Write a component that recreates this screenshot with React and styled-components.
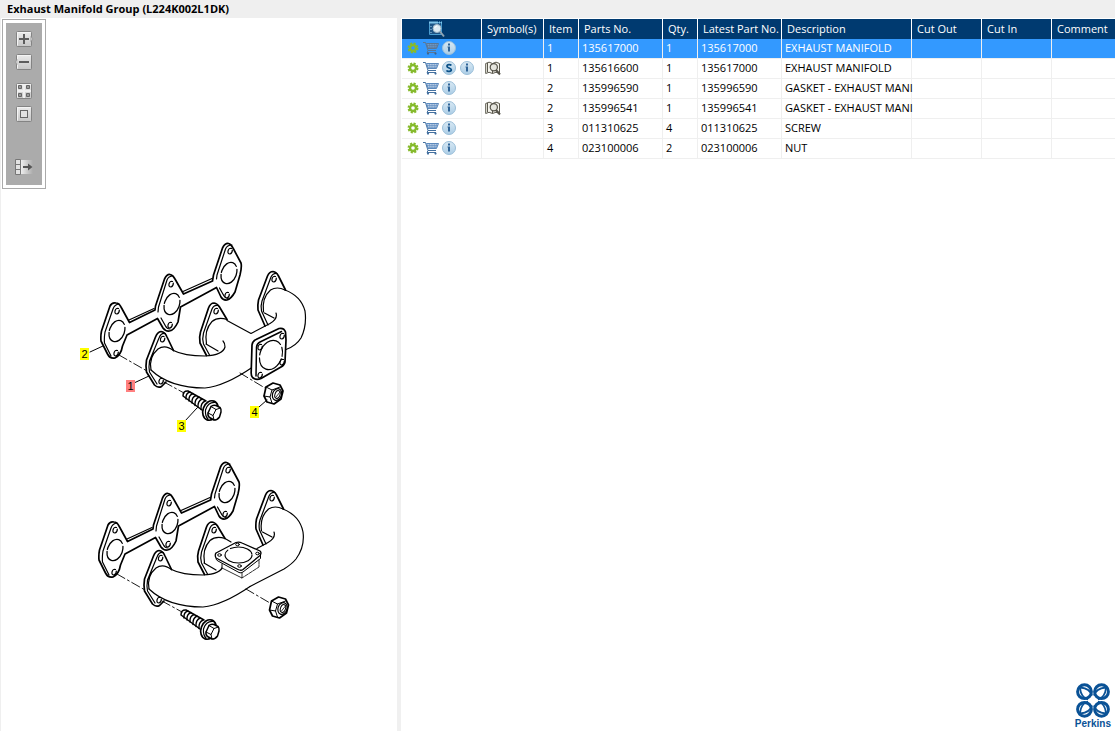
import React from 'react'
import styled, { createGlobalStyle } from 'styled-components'

const columns = [
  { title: 'Symbol(s)', width: 62 },
  { title: 'Item', width: 35 },
  { title: 'Parts No.', width: 84 },
  { title: 'Qty.', width: 35 },
  { title: 'Latest Part No.', width: 84 },
  { title: 'Description', width: 130 },
  { title: 'Cut Out', width: 70 },
  { title: 'Cut In', width: 70 },
  { title: 'Comment' },
]

const parts = [
  { item: '1', no: '135617000', qty: '1', latest: '135617000', description: 'EXHAUST MANIFOLD', selected: true },
  { item: '1', no: '135616600', qty: '1', latest: '135617000', description: 'EXHAUST MANIFOLD', service: true, book: true },
  { item: '2', no: '135996590', qty: '1', latest: '135996590', description: 'GASKET - EXHAUST MANI' },
  { item: '2', no: '135996541', qty: '1', latest: '135996541', description: 'GASKET - EXHAUST MANI', book: true },
  { item: '3', no: '011310625', qty: '4', latest: '011310625', description: 'SCREW' },
  { item: '4', no: '023100006', qty: '2', latest: '023100006', description: 'NUT' },
]

const callouts = [
  { label: '2', x: 79, y: 330 },
  { label: '1', x: 125, y: 362, active: true },
  { label: '3', x: 176, y: 402 },
  { label: '4', x: 249, y: 388 },
]

/* toolbar icons */

const Plate = () => (
  <>
    <rect x="2.5" y="0.5" width="15" height="15" rx="1" fill="url(#plate)" stroke="#838383" />
    <path d="M3.5 14.5V1.5H16.5" fill="none" stroke="#f4f4f4" />
  </>
)

const ZoomInIcon = () => (
  <svg width="20" height="16" viewBox="0 0 20 16" aria-hidden="true">
    <defs>
      <linearGradient id="plate" x1="0" y1="0" x2="0" y2="1">
        <stop offset="0" stopColor="#ececec" />
        <stop offset="1" stopColor="#c6c6c6" />
      </linearGradient>
    </defs>
    <Plate />
    <path d="M17 5.5l2 2.500L17 10.500z" fill="#dedede" stroke="#8a8a8a" strokeWidth="0.7" />
    <path d="M10 3v10M5 8h10" stroke="#5c5c5c" strokeWidth="2" />
  </svg>
)

const ZoomOutIcon = () => (
  <svg width="20" height="16" viewBox="0 0 20 16" aria-hidden="true">
    <Plate />
    <path d="M3 5.5L1 8L3 10.5z" fill="#dedede" stroke="#8a8a8a" strokeWidth="0.7" />
    <path d="M5 8h10" stroke="#5c5c5c" strokeWidth="2" />
  </svg>
)

const TilesIcon = () => (
  <svg width="20" height="16" viewBox="0 0 20 16" aria-hidden="true">
    <Plate />
    <path d="M4.5 2.5h3v3h-3zM12.5 2.5h3v3h-3zM4.5 10.5h3v3h-3zM12.5 10.5h3v3h-3z" fill="#999" stroke="#666" />
    <path d="M10 1v14M3 8h14" stroke="#f0f0f0" strokeWidth="2" />
  </svg>
)

const FitIcon = () => (
  <svg width="20" height="16" viewBox="0 0 20 16" aria-hidden="true">
    <Plate />
    <rect x="6.500" y="4.5" width="7" height="7" fill="#e2e2e2" stroke="#666" />
  </svg>
)

const ExportIcon = () => (
  <svg width="20" height="16" viewBox="0 0 20 16" aria-hidden="true">
    <defs>
      <linearGradient id="fade">
        <stop offset="0" stopColor="#eee" />
        <stop offset="1" stopColor="#ababab" />
      </linearGradient>
    </defs>
    <path d="M7 1h12v14H7z" fill="url(#fade)" />
    <path d="M1.500 0.5h5v15h-5zM1.500 5.5h5M1.500 10.5h5" fill="#e2e2e2" stroke="#777" />
    <path d="M9 8h7" stroke="#555" strokeWidth="2" />
    <path d="M14 4.5L18.500 8L14 11.5z" fill="#555" />
  </svg>
)

/* table icons */

const FindIcon = () => (
  <svg width="16" height="16" viewBox="0 0 16 16" aria-hidden="true">
    <path d="M0.5 1.5h12v12h-12z" fill="#1d5486" stroke="#4b9dd0" />
    <path d="M0 1.5h13" stroke="#7fc4ea" strokeWidth="2" strokeDasharray="9 1 1 1" />
    <path d="M2 5v8" stroke="#a9d6ef" strokeDasharray="1 2" />
    <circle cx="8" cy="7.5" r="4" fill="#dceaf3" stroke="#9fb6c6" />
    <path d="M5.8 7A2.5 2.5 0 0 1 8.3 5" fill="none" stroke="#fff" />
    <path d="M11 10.5l4 5" stroke="#8fa3b2" strokeWidth="2" />
  </svg>
)

const GearIcon = () => (
  <svg width="12" height="12" viewBox="0 0 12 12" aria-hidden="true">
    <circle cx="6" cy="6" r="4.5" fill="none" stroke="#86ba2c" strokeWidth="2" strokeDasharray="2.1 1.434" />
    <circle cx="6" cy="6" r="3" fill="none" stroke="#86ba2c" strokeWidth="2.400" />
  </svg>
)

const CartIcon = ({ dim }) => (
  <svg width="16" height="14" viewBox="0 0 16 14" aria-hidden="true">
    <path d="M0 1.500h2.500L5 9.5h8M5 9.5L4 11.5H13" fill="none" stroke={dim ? '#5b7795' : '#44709f'} />
    <path d="M3.5 2.5h12L13.5 7.5H5z" fill={dim ? '#6d9bcb' : '#bed1e8'} stroke={dim ? '#5b7795' : '#5d8abd'} />
    <path d="M4 4.5h11M5 6.3h9M6.5 2.5l0.5 5M9 2.5v5M11.3 2.5v5M13.5 2.5L12.8 7" stroke={dim ? '#5b7795' : '#5d8abd'} strokeWidth="0.6" />
    <circle cx="5" cy="12.6" r="1.1" fill={dim ? '#3f648c' : '#44709f'} />
    <circle cx="12.500" cy="12.6" r="1.1" fill={dim ? '#3f648c' : '#44709f'} />
  </svg>
)

const Disc = () => (
  <>
    <defs>
      <linearGradient id="disc" x1="0" y1="0" x2="0" y2="1">
        <stop offset="0" stopColor="#d9e9f4" />
        <stop offset="1" stopColor="#abcde6" />
      </linearGradient>
    </defs>
    <circle cx="7" cy="7" r="6.5" fill="url(#disc)" stroke="#9bbfd9" />
  </>
)

const InfoIcon = () => (
  <svg width="14" height="14" viewBox="0 0 14 14" aria-hidden="true">
    <Disc />
    <path d="M6 2.5h2v2H6zM5.5 5.5H8v5H6V6.5h-.5z" fill="#2f6498" />
  </svg>
)

const ServiceIcon = () => (
  <svg width="14" height="14" viewBox="0 0 14 14" aria-hidden="true">
    <Disc />
    <path d="M9.3 4.5C8.6 3.5 5 3.2 5 5.2S9.3 6.8 9.3 8.8S5.4 10.9 4.6 9.4" fill="none" stroke="#0b5087" strokeWidth="1.8" />
  </svg>
)

const BookIcon = () => (
  <svg width="16" height="15" viewBox="0 0 16 15" aria-hidden="true">
    <path d="M0.7 2.5Q4-0.2 7.5 2.5Q11-0.2 14.5 2.5V12.5Q11 10 7.5 12.5Q4 10 0.7 12.5z" fill="#f5f4ed" stroke="#5b594e" />
    <path d="M2.5 2v9M7.5 2.5v10" stroke="#5b594e" />
    <circle cx="8.8" cy="6.2" r="3.6" fill="#e6e6df" stroke="#55534a" strokeWidth="1.2" />
    <path d="M11 9l4 4.5" stroke="#55534a" strokeWidth="2" />
  </svg>
)

/* exploded drawing */

const Bore = ({ x, y }) => (
  <ellipse cx={x} cy={y} rx="7.5" ry="11" transform={`rotate(20 ${x} ${y})`} strokeWidth="1.3" strokeDasharray="25 2 22 3 8" />
)

const Hole = ({ x, y }) => (
  <path d={`M${x + 1.5} ${y - 2.5}Q${x - 1} ${y - 3.5} ${x - 2} ${y}Q${x - 2.5} ${y + 3} ${x} ${y + 3}Q${x + 2.5} ${y + 2} ${x + 2.3} ${y - 1}`} />
)

const Gasket = () => (
  <g>
    <path
      strokeWidth="1.7"
      d="M110 306Q112 302 116 303Q119 303 121 307L129.5 322.5L155 310L155.5 306L164.5 279Q167 274 170 274.5Q173 275 175 279L183.5 294L212.5 281L213.5 275L222.5 248Q225 243 228.5 243.5Q231 244 233 248L241 263Q242 267 240 275L235 292Q231 299 227 300Q223 300.5 221 297L216.5 287.5L180.5 307L178 322Q174 330.5 169.5 331Q165.5 331.5 163 328L157.5 318.5L127 335L122.5 346Q121 355 115 358Q110 359 107.5 354L101 341Q100.5 336 101.5 331z"
    />
    <path d="M119 304Q114.5 304.5 113 309L105 332Q104 338 104.5 343L111 356M173 276Q168.5 276 167 280L158.5 307L158 312M232 245Q227 245 225.5 249L217 275L216.5 279" />
    <path d="M129 320L154 308.5M183 291.5L212 278.5M161 318L165.5 326Q167 329 170 329M219.5 288L224 296Q225.5 298.5 228 298.5" />
    <Bore x={117} y={331} />
    <Bore x={172} y={304} />
    <Bore x={229} y={273} />
    <Hole x={117} y={311} />
    <Hole x={116} y={353} />
    <Hole x={171} y={284} />
    <Hole x={170} y={325} />
    <Hole x={230} y={251} />
    <Hole x={227} y={295} />
  </g>
)

const Flanges = () => (
  <g>
    <path strokeWidth="1.7" d="M265 326L258 310Q257.5 305 258.5 300L267.5 276Q269.5 271.5 273 271.5Q276.5 272 278.5 276L285.5 290" />
    <path d="M277 273.5Q273 273 271 277L262 301Q260.5 306 261.5 311L268 325M263.5 312Q261.5 298 270.5 290Q277 286 285 290M264.5 313L274 318" />
    <Hole x={274} y={279} />
    <path strokeWidth="1.7" d="M206.5 355.5L200 343Q199 337 200.5 332L208.5 308Q210.5 303 214 303Q217.5 303.5 219.5 307L227 319.5" />
    <path d="M218 305.5Q214 304.5 212 309L203.5 333Q202 339 203.5 344L209.5 355M206.5 344Q204 330 212 321.5Q218 316.5 227 319.5M206 344L218 351" />
    <Hole x={216} y={311} />
    <path strokeWidth="1.7" d="M173.5 350.5L167 337Q165 332 161 331.5Q157.5 332 155.5 337L146.5 360Q145.5 366 146.5 372L154.5 385Q158 388.5 161.5 386.5L166 382" />
    <path d="M165.5 333.5Q161 332.5 159 338L149.5 361Q148.5 367 149.5 372L157 384M151 370Q148.5 357 158 349Q165 344 173.5 350.5" />
    <Hole x={162.5} y={339} />
    <Hole x={161} y={381} />
    <path d="M151 370Q170 388 205 388Q225 386 252 367.5M173.5 350.5Q184 356 205 356Q223 355 225 347Q225 343 223 341" />
  </g>
)

const Bolt = () => (
  <g>
    <path strokeWidth="1.5" d="M206 401L188 391Q183 390.5 183 396L202 410" />
    <path strokeWidth="1.4" d="M190 392Q185.5 393 186 399M193 393.5Q188.5 395 189 401M196 395.5Q191.5 397 192 403M199 397Q194.5 399 195 405.5M202 399Q197.5 401 198 407.5M205 401Q200.5 403 201 409.5" />
    <ellipse cx="210.5" cy="410.5" rx="7.5" ry="10" transform="rotate(20 210.5 410.5)" fill="#fff" strokeWidth="1.7" />
    <path d="M215 402.5Q208 402 205.500 410Q205 416 208 419" />
    <path fill="#fff" strokeWidth="1.5" d="M211 406.500Q213 404.500 216 405.500L220 407.500Q221.500 409 221 412L219.500 417Q217.500 420 214 420L209.500 417.500Q207.500 416 208 413z" />
    <path d="M211 406.500L216 409.500L220.500 408M216 409.500L213 415.500L208 413M213 415.500L214 420" strokeWidth="1" />
  </g>
)

const Nut = () => (
  <g>
    <path fill="#fff" strokeWidth="1.7" d="M266 387L273 383L280 385L283 391L281 399L274 404L267 402L264 396z" />
    <path d="M266 387L272 390L280 387M272 390L270 397L264 396M270 397L272 403" strokeWidth="1" />
    <ellipse cx="277" cy="394.5" rx="4.5" ry="6" transform="rotate(20 277 394.5)" strokeWidth="1.2" />
    <ellipse cx="277.5" cy="394.5" rx="2.5" ry="4" transform="rotate(20 277.5 394.5)" strokeWidth="1" />
    <path d="M276 397L280 392" strokeWidth="0.8" />
  </g>
)

const ManifoldDrawing = () => (
  <Drawing viewBox="1 18 396 640" width="396" height="640" role="img" aria-label="Exhaust manifold exploded view">
    <Gasket />
    <Flanges />
    <path d="M285 290Q301 296 305 311Q307 326 301 338Q296 346 286 349.5M276 313Q278 319 270 323.5L251 333.5L227 320.5" />
    <path
      fill="#fff"
      strokeWidth="1.7"
      d="M252 345Q252.5 341 256 339.5L279 328.5Q284 327.5 285.5 332L286 340L285 362Q284.5 365 281 367L261 378.5Q256 380.5 252.5 377.5Q251 376 251.2 372z"
    />
    <path strokeWidth="1.5" d="M256 376L256.5 347Q257 343.5 260 342L281.5 331.5" />
    <ellipse cx="271" cy="355" rx="11" ry="15" transform="rotate(20 271 355)" strokeDasharray="34 3 30 3 9 3" />
    <Hole x={260} y={347} />
    <Hole x={282} y={336} />
    <Hole x={282} y={362} />
    <Hole x={260} y={375} />
    <Bolt />
    <Nut />
    <path strokeWidth="0.9" strokeDasharray="9 3 2 3" d="M119 355L147 371M164 382L184 393M240 373L265 388" />
    <path strokeWidth="1" d="M90 352L103 346M134 383L149 376M185 421L197 408M259 407L267 400" />

    <g transform="translate(-2 219)">
      <Gasket />
      <Flanges />
      <path d="M285 290Q302 297 305 313Q307 328 298 340Q294 345 286 350L252 367.5M276 313Q278 319 270 323.5L259 329.5" />
      <path d="M227 319.5L233 323" />
      <Bolt />
    </g>
    <path stroke="none" fill="#fff" d="M215 554L238 542L261 552V567L242 578L222 568z" />
    <path strokeWidth="1.3" d="M216 553L236 542.5Q239 541.5 242 543L260 551Q262 553 260 555.5L243 569.5Q241 571 238 569.5L216 558Q214.5 555 216 553z" />
    <path d="M216 559Q216 560 218 561L239 572.5Q241 573.5 243 572L260.5 558.5V554M222 564V568" strokeWidth="1" />
    <path strokeWidth="0.8" d="M222 568L242 578V573" />
    <path strokeWidth="0.8" strokeDasharray="4 1" d="M259 560V567L242 578" />
    <ellipse cx="238.5" cy="555" rx="13.5" ry="8" strokeDasharray="40 3 24 2" />
    <ellipse cx="237.5" cy="544.5" rx="1.8" ry="1.3" strokeWidth="1" />
    <ellipse cx="219.5" cy="555" rx="1.8" ry="1.3" strokeWidth="1" />
    <ellipse cx="257.5" cy="553.5" rx="1.8" ry="1.3" strokeWidth="1" />
    <ellipse cx="239.5" cy="566" rx="1.8" ry="1.3" strokeWidth="1" />
    <g transform="translate(5.5 214)">
      <Nut />
    </g>
    <path strokeWidth="0.9" strokeDasharray="9 3 2 3" d="M117 574L145 590M162 601L182 612M246 589L270 603" />
  </Drawing>
)

const PerkinsMark = () => (
  <svg width="34" height="35" viewBox="0 0 34 35" fill="none" stroke="#0a5296" aria-hidden="true">
    {[[1, 1], [-1, 1], [1, -1], [-1, -1]].map(([sx, sy]) => (
      <g key={`${sx}${sy}`} transform={`translate(17 17.5) scale(${sx} ${sy})`}>
        <circle cx="8.5" cy="8.8" r="6.9" strokeWidth="3" />
        <path strokeWidth="1.8" d="M1 5Q3 12 12.500 13M5 1Q12 3 13 12.500" />
      </g>
    ))}
  </svg>
)

const App = () => {
  return (
    <Page>
      <GlobalStyle />
      <TitleBar>Exhaust Manifold Group (L224K002L1DK)</TitleBar>
      <Content>
        <DiagramPane>
          <ManifoldDrawing />
          {callouts.map((c) => (
            <Callout key={c.label} $x={c.x} $y={c.y} $active={c.active}>{c.label}</Callout>
          ))}
          <Toolbar>
            <ToolGroup>
              <ToolButton aria-label="Zoom in"><ZoomInIcon /></ToolButton>
              <ToolButton aria-label="Zoom out"><ZoomOutIcon /></ToolButton>
            </ToolGroup>
            <ToolGroup>
              <ToolButton aria-label="Tiles"><TilesIcon /></ToolButton>
              <ToolButton aria-label="Fit to window"><FitIcon /></ToolButton>
            </ToolGroup>
            <ExportButton aria-label="Export"><ExportIcon /></ExportButton>
          </Toolbar>
        </DiagramPane>
        <Splitter />
        <PartsPane>
          <PartsTable>
            <colgroup>
              <Col $width={80} />
              {columns.map((c) => <Col key={c.title} $width={c.width} />)}
            </colgroup>
            <thead>
              <tr>
                <IconHead aria-label="Find"><FindIcon /></IconHead>
                {columns.map((c) => <Th key={c.title}>{c.title}</Th>)}
              </tr>
            </thead>
            <tbody>
              {parts.map((part, index) => (
                <Row key={index} $selected={part.selected}>
                  <Td>
                    <Actions>
                      <IconButton aria-label="Options"><GearIcon /></IconButton>
                      <IconButton aria-label="Add to cart"><CartIcon dim={part.selected} /></IconButton>
                      {part.service && <IconButton aria-label="Supersession"><ServiceIcon /></IconButton>}
                      <IconButton aria-label="Information"><InfoIcon /></IconButton>
                    </Actions>
                  </Td>
                  <Td>
                    {part.book && <Actions><IconButton aria-label="Open book"><BookIcon /></IconButton></Actions>}
                  </Td>
                  <Td>{part.item}</Td>
                  <Td>{part.no}</Td>
                  <Td>{part.qty}</Td>
                  <Td>{part.latest}</Td>
                  <Td>{part.description}</Td>
                  <Td />
                  <Td />
                  <Td />
                </Row>
              ))}
            </tbody>
          </PartsTable>
          <Brand>
            <PerkinsMark />
            <BrandName>Perkins</BrandName>
          </Brand>
        </PartsPane>
      </Content>
    </Page>
  )
}

const GlobalStyle = createGlobalStyle`
  * {
    box-sizing: border-box;
  }
  body {
    margin: 0;
    background: #fff;
    color: #000;
    font-family: 'Open Sans', 'Noto Sans', sans-serif;
    font-size: 11px;
  }
  button {
    padding: 0;
    border: 0;
    background: transparent;
    font: inherit;
    cursor: pointer;
  }
  svg {
    display: block;
    overflow: visible;
  }
`

const Page = styled.div`
  display: flex;
  flex-direction: column;
  min-height: 100vh;
`

const TitleBar = styled.h1`
  margin: 0;
  padding: 0 7px;
  background: #efefef;
  font-size: 11px;
  font-weight: 700;
  line-height: 18px;
`

const Content = styled.main`
  flex: 1;
  display: flex;
`

const DiagramPane = styled.section`
  position: relative;
  flex: 0 0 397px;
  border-left: 1px solid #efefef;
`

const Drawing = styled.svg`
  position: absolute;
  top: 0;
  left: 0;
  fill: none;
  stroke: #000;
  stroke-width: 1.2px;
  stroke-linecap: round;
  stroke-linejoin: round;
`

const Callout = styled.button`
  position: absolute;
  left: ${({ $x }) => $x}px;
  top: ${({ $y }) => $y}px;
  width: 9px;
  height: 12px;
  background: ${({ $active }) => ($active ? '#ff8080' : '#ffff00')};
  color: #000;
  font-family: 'Liberation Sans', sans-serif;
  font-size: 11px;
  line-height: 12px;
  text-align: center;
`

const Toolbar = styled.div`
  position: relative;
  display: flex;
  flex-direction: column;
  gap: 13px;
  width: 44px;
  margin: 1px;
  padding: 11px 11px 13px;
  border: 1px solid #aaa;
  background: #ababab;
  box-shadow: inset 0 0 0 3px #fff;
`

const ToolGroup = styled.div`
  display: flex;
  flex-direction: column;
  gap: 7px;
`

const ToolButton = styled.button`
  width: 20px;
  height: 16px;
`

const ExportButton = styled(ToolButton)`
  margin-top: 24px;
`

const Splitter = styled.div`
  flex: 0 0 4px;
  background: #f0f0f0;
`

const PartsPane = styled.section`
  flex: 1;
  min-width: 0;
  display: flex;
  flex-direction: column;
  padding: 1px 0 1px 1px;
`

const PartsTable = styled.table`
  width: 100%;
  table-layout: fixed;
  border-collapse: separate;
  border-spacing: 0;
`

const Col = styled.col`
  width: ${({ $width }) => ($width ? `${$width}px` : 'auto')};
`

const Th = styled.th`
  height: 20px;
  padding: 0 0 0 5px;
  border-right: 1px solid #fff;
  background: #003a70;
  color: #fff;
  font-weight: 400;
  line-height: 20px;
  text-align: left;
  white-space: nowrap;

  &:last-child {
    border-right: 0;
  }
`

const IconHead = styled(Th)`
  padding: 0 0 0 27px;
`

const Td = styled.td`
  height: 20px;
  padding: 0 0 0 3px;
  border-right: 1px solid #efefef;
  border-bottom: 1px solid #efefef;
  line-height: 18px;
  vertical-align: top;
  white-space: nowrap;

  &:first-child,
  &:nth-child(2) {
    padding-left: 2px;
  }

  &:last-child {
    border-right: 0;
  }
`

const Row = styled.tr`
  background: ${({ $selected }) => ($selected ? '#3399ff' : '#fff')};
  color: ${({ $selected }) => ($selected ? '#fff' : '#000')};
`

const Actions = styled.div`
  display: flex;
`

const IconButton = styled.button`
  display: flex;
  align-items: center;
  justify-content: center;
  width: 18px;
  height: 18px;
`

const Brand = styled.footer`
  display: flex;
  flex-direction: column;
  align-items: center;
  align-self: flex-end;
  margin-top: auto;
  padding-right: 4px;
`

const BrandName = styled.span`
  color: #0a5296;
  font-family: 'Liberation Sans', sans-serif;
  font-size: 10px;
  font-weight: 700;
  line-height: 12px;
`

export default App
